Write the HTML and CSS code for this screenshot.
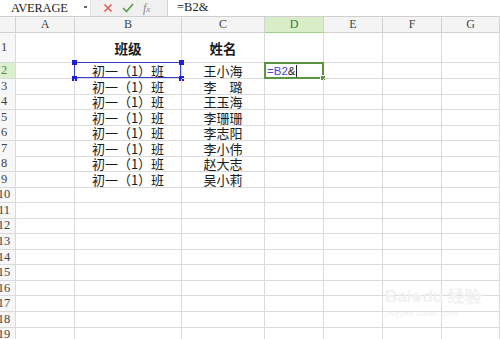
FILE: index.html
```html
<!DOCTYPE html>
<html>
<head>
<meta charset="utf-8">
<link rel="stylesheet" href="styles.css">
</head>
<body>
<div class="app">
  <div class="fbar">
    <div class="namebox"><span class="nm">AVERAGE</span><span class="dd"></span></div>
    <div class="btns">
      <svg class="ic" width="10" height="10" viewBox="0 0 10 10"><path d="M1.5 1.5 L8.5 8.5 M8.5 1.5 L1.5 8.5" stroke="#e0605a" stroke-width="1.6" fill="none"/></svg>
      <svg class="ic" width="12" height="10" viewBox="0 0 12 10"><path d="M1 5 L4.5 8.5 L11 1" stroke="#5aa048" stroke-width="1.7" fill="none"/></svg>
      <span class="fx">f<small>x</small></span>
    </div>
    <div class="formula">=B2&amp;</div>
  </div>
  <div class="sheet">
    <div class="row hdr"><div class="corner"></div><div>A</div><div>B</div><div>C</div><div class="on">D</div><div>E</div><div>F</div><div>G</div></div>
    <div class="row r1"><div class="rh"><span>1</span></div><div></div><div class="cc b">班级</div><div class="cc b">姓名</div><div></div><div></div><div></div><div></div></div>
    <div class="row"><div class="rh on"><span>2</span></div><div></div><div class="cc sel">初一（1）班<i class="h tl"></i><i class="h tr"></i><i class="h bl"></i><i class="h br"></i></div><div class="cc">王小海</div><div class="act"><span class="ref">=B2</span>&amp;<span class="caret"></span><i class="fill"></i></div><div></div><div></div><div></div></div>
    <div class="row"><div class="rh"><span>3</span></div><div></div><div class="cc">初一（1）班</div><div class="cc">李　璐</div><div></div><div></div><div></div><div></div></div>
    <div class="row"><div class="rh"><span>4</span></div><div></div><div class="cc">初一（1）班</div><div class="cc">王玉海</div><div></div><div></div><div></div><div></div></div>
    <div class="row"><div class="rh"><span>5</span></div><div></div><div class="cc">初一（1）班</div><div class="cc">李珊珊</div><div></div><div></div><div></div><div></div></div>
    <div class="row"><div class="rh"><span>6</span></div><div></div><div class="cc">初一（1）班</div><div class="cc">李志阳</div><div></div><div></div><div></div><div></div></div>
    <div class="row"><div class="rh"><span>7</span></div><div></div><div class="cc">初一（1）班</div><div class="cc">李小伟</div><div></div><div></div><div></div><div></div></div>
    <div class="row"><div class="rh"><span>8</span></div><div></div><div class="cc">初一（1）班</div><div class="cc">赵大志</div><div></div><div></div><div></div><div></div></div>
    <div class="row"><div class="rh"><span>9</span></div><div></div><div class="cc">初一（1）班</div><div class="cc">吴小莉</div><div></div><div></div><div></div><div></div></div>
    <div class="row"><div class="rh"><span>10</span></div><div></div><div></div><div></div><div></div><div></div><div></div><div></div></div>
    <div class="row"><div class="rh"><span>11</span></div><div></div><div></div><div></div><div></div><div></div><div></div><div></div></div>
    <div class="row"><div class="rh"><span>12</span></div><div></div><div></div><div></div><div></div><div></div><div></div><div></div></div>
    <div class="row"><div class="rh"><span>13</span></div><div></div><div></div><div></div><div></div><div></div><div></div><div></div></div>
    <div class="row"><div class="rh"><span>14</span></div><div></div><div></div><div></div><div></div><div></div><div></div><div></div></div>
    <div class="row"><div class="rh"><span>15</span></div><div></div><div></div><div></div><div></div><div></div><div></div><div></div></div>
    <div class="row"><div class="rh"><span>16</span></div><div></div><div></div><div></div><div></div><div></div><div></div><div></div></div>
    <div class="row"><div class="rh"><span>17</span></div><div></div><div></div><div></div><div></div><div></div><div></div><div></div></div>
    <div class="row"><div class="rh"><span>18</span></div><div></div><div></div><div></div><div></div><div></div><div></div><div></div></div>
    <div class="row"><div class="rh"><span>19</span></div><div></div><div></div><div></div><div></div><div></div><div></div><div></div></div>
  </div>
  <div class="wm">
    <div class="wm1">Bai<span class="paw">❀</span>du 经验</div>
    <div class="wm2">jingyan.baidu.com</div>
  </div>
</div>
</body>
</html>
```
FILE: styles.css
```css
html, body { margin: 0; padding: 0; background: #fff; }
body { width: 500px; height: 339px; overflow: hidden; }
.app { position: relative; width: 500px; height: 339px; overflow: hidden; font-family: "Liberation Serif", "Noto Sans CJK SC", serif; color: #222; }

.fbar { display: flex; height: 16px; border-bottom: 1px solid #cfcfcf; background: #fff; }
.namebox { width: 90px; display: flex; align-items: center; justify-content: space-between; padding-left: 11px; padding-right: 3px; box-sizing: border-box; font-size: 12.5px; font-family: "Liberation Serif", serif; }
.nm { letter-spacing: -0.2px; }
.dd { width: 3px; height: 2px; background: #666; margin-bottom: 2px; }
.btns { width: 78px; background: #f0f0f0; border-left: 1px solid #e2e2e2; border-right: 1px solid #d4d4d4; box-sizing: border-box; display: flex; align-items: center; padding-left: 12px; gap: 9px; }
.fx { font-style: italic; color: #888; font-size: 12px; font-family: "Liberation Serif", serif; }
.fx small { font-size: 9px; }
.formula { padding-left: 9px; font-size: 12.5px; line-height: 15px; font-family: "Liberation Serif", serif; }

.sheet { display: flex; flex-direction: column; }
.row { display: grid; grid-template-columns: 16px 59px 107px 83px 59px 59px 59px 58px; height: 15.57px; }
.row > div { border-right: 1px solid #dadada; border-bottom: 1px solid #dadada; box-sizing: border-box; position: relative; }
.row.hdr { height: 16px; background: #f4f4f4; }
.row.hdr > div { border-color: #d2d2d2; display: flex; align-items: center; justify-content: center; font-size: 12px; color: #444; }
.row.hdr > div.on { background: #d9edc9; color: #3f7a30; border-bottom-color: #9fcf88; }
.row.r1 { height: 30px; }

.rh { background: #f7f7f7; overflow: hidden; display: flex; align-items: center; font-size: 12.5px; color: #444; }
.rh span { flex: none; width: 24px; margin-left: -8px; text-align: center; }
.rh.on { background: #dcefcf; color: #4c8a3a; }

.cc { display: flex; align-items: center; justify-content: center; font-family: "Noto Sans CJK SC", sans-serif; font-size: 13px; line-height: 14px; padding-top: 1px; color: #1a1a1a; }
.cc.b { font-weight: bold; font-size: 13.5px; padding-top: 0; }

.sel::before { content: ""; position: absolute; left: -1px; top: -1px; right: 0; bottom: 0; border: 1px solid #3c3ccc; }
.h { position: absolute; width: 5px; height: 5px; background: #1e1ee0; }
.h.tl { left: -3px; top: -3px; }
.h.tr { right: -3px; top: -3px; }
.h.bl { left: -3px; bottom: -3px; }
.h.br { right: -3px; bottom: -3px; }

.act { display: flex; align-items: center; font-family: "Liberation Sans", sans-serif; font-size: 11.5px; padding-left: 2px; color: #222; }
.act::before { content: ""; position: absolute; left: -1px; top: -1px; right: -1px; bottom: -1px; border: 2px solid #5b9442; }
.ref { color: #4646d0; }
.caret { display: inline-block; width: 1px; height: 12px; background: #222; margin-left: 1px; }
.fill { position: absolute; right: -3px; bottom: -3px; width: 4px; height: 4px; background: #5b9442; border: 1px solid #fff; }

.wm { position: absolute; left: 385px; top: 288px; color: #f1f1f1; font-family: "Liberation Sans", sans-serif; }
.wm1 { font-size: 17px; font-weight: bold; line-height: 18px; }
.paw { font-size: 13px; }
.wm2 { font-size: 8px; margin-top: 2px; letter-spacing: 0.5px; }
```
